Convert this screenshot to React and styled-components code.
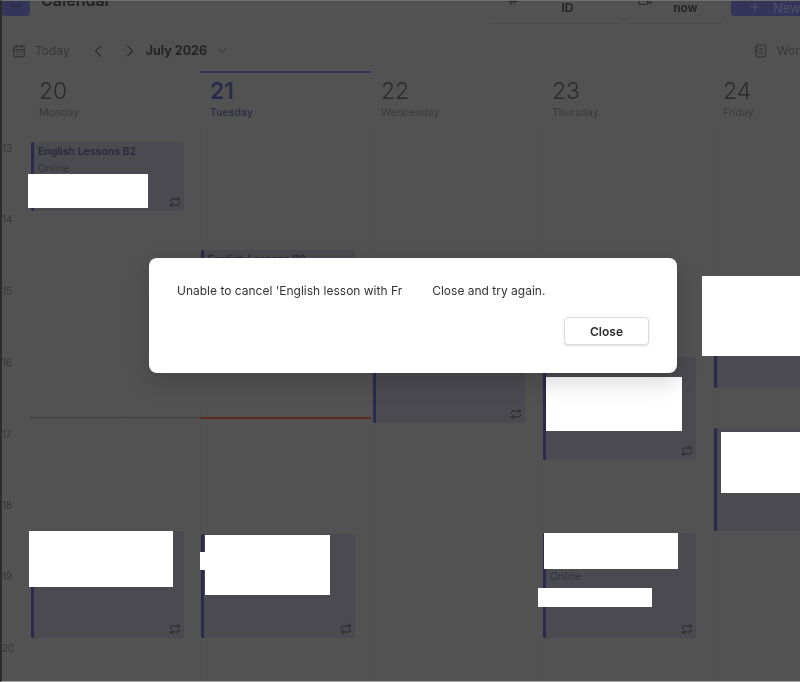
import styled, { createGlobalStyle } from "styled-components";
import { ChevronLeft, ChevronRight, ChevronDown, Repeat, Plus, Hash, Video, CalendarDays, NotebookText, Calendar } from "lucide-react";

const Global = createGlobalStyle`
  html, body { margin: 0; padding: 0; background: #525252; }
  * { box-sizing: border-box; }
`;

const Page = styled.div`
  position: relative;
  width: 800px;
  height: 682px;
  overflow: hidden;
  background: #525252;
  font-family: Inter, "Liberation Sans", sans-serif;
`;

const Backdrop = styled.div`
  height: 100%;
  display: flex;
  flex-direction: column;
  border-top: 1px solid #707070;
  border-bottom: 1px solid #a8a8a8;
  border-left: 2px solid #2c2c2c;
  filter: blur(0.7px);
`;

const TopBar = styled.div`
  height: 23px;
  flex: none;
  display: flex;
  align-items: flex-end;
  overflow: hidden;
`;

const AppIcon = styled.div`
  width: 28px;
  height: 34px;
  flex: none;
  border-radius: 4px;
  background: #35355a;
  margin-bottom: 8px;
  display: flex;
  align-items: flex-end;
  justify-content: center;
  padding-bottom: 9px;
  color: #25253a;
`;

const AppTitle = styled.div`
  margin: 0 0 14px 11px;
  font-size: 16px;
  font-weight: 600;
  line-height: 20px;
  color: #222;
`;

const TopButton = styled.div`
  height: 30px;
  flex: none;
  width: ${(p) => p.$w}px;
  margin-left: ${(p) => p.$ml}px;
  padding: 0 0 8px ${(p) => p.$pl}px;
  border-bottom: 1px solid #484848;
  display: flex;
  flex-direction: column;
  align-items: center;
  justify-content: flex-end;
  font-size: 12px;
  line-height: 14px;
  font-weight: 600;
  color: #222;
  position: relative;
`;

const TopButtonIcon = styled.span`
  position: absolute;
  top: 0;
  left: ${(p) => p.$x}px;
  color: #2a2a2a;
  display: flex;
`;

const NewButton = styled.div`
  flex: none;
  width: 80px;
  height: 30px;
  margin: 0 0 8px 9px;
  padding: 14px 0 0 17px;
  border-radius: 4px;
  background: #35355a;
  display: flex;
  align-items: flex-start;
  gap: 11px;
  font-size: 13px;
  line-height: 16px;
  color: #50506f;
`;

const Toolbar = styled.div`
  height: 47px;
  flex: none;
  display: flex;
  align-items: center;
  padding: 6px 0 0 10px;
  color: #333;
`;

const TodayLabel = styled.span`
  margin: 0 18px 0 9px;
  font-size: 12px;
  color: #383838;
`;

const MonthLabel = styled.span`
  margin: 0 8px 0 0;
  font-size: 12.5px;
  font-weight: 700;
  color: #242424;
`;

const NavButton = styled.span`
  display: flex;
  margin-right: ${(p) => p.$mr}px;
  color: #303030;
`;

const WorkWeek = styled.div`
  margin-left: auto;
  margin-right: -40px;
  display: flex;
  align-items: center;
  gap: 9px;
  font-size: 12px;
  color: #383838;
  white-space: nowrap;
`;

const DayHeaderRow = styled.div`
  height: 54px;
  flex: none;
  display: flex;
  padding-left: 27px;
`;

const DayHeader = styled.div`
  width: 171px;
  flex: none;
  padding: 5px 0 0 10px;
  border-top: 2px solid ${(p) => (p.$active ? "#33335c" : "transparent")};
`;

const DayNumber = styled.div`
  font-size: 23px;
  line-height: 27px;
  font-weight: ${(p) => (p.$active ? 600 : 300)};
  color: ${(p) => (p.$active ? "#2a2a4c" : "#2c2c2c")};
`;

const DayName = styled.div`
  font-size: 10.5px;
  line-height: 14px;
  margin-top: 1px;
  font-weight: ${(p) => (p.$active ? 600 : 400)};
  color: ${(p) => (p.$active ? "#303048" : "#3a3a3a")};
`;

const Body = styled.div`
  flex: 1;
  min-height: 0;
  display: flex;
`;

const Gutter = styled.div`
  width: 28px;
  flex: none;
  padding-top: 17px;
`;

const HourLabel = styled.div`
  height: 71.4px;
  font-size: 10px;
  line-height: 12px;
  color: #363636;
`;

const DayColumn = styled.div`
  position: relative;
  width: 171px;
  flex: none;
  border-right: 1px solid #4f4f4f;
`;

const Event = styled.div`
  position: absolute;
  left: ${(p) => p.$left}px;
  top: ${(p) => p.$top}px;
  width: ${(p) => p.$width}px;
  height: ${(p) => p.$height}px;
  padding: 3px 0 0 4px;
  background: #4a4a50;
  border-left: 3px solid #2a2a4e;
  border-radius: 2px;
`;

const EventTitle = styled.div`
  font-size: 10.5px;
  line-height: 14px;
  font-weight: 600;
  color: #2a2a38;
`;

const EventSpacer = styled.div`
  height: 31px;
`;

const EventPlace = styled.div`
  font-size: 10.5px;
  line-height: 14px;
  margin-top: 3px;
  color: #35353c;
`;

const RepeatMark = styled.span`
  position: absolute;
  right: 3px;
  bottom: 3px;
  display: flex;
  color: #26262a;
`;

const NowLine = styled.div`
  position: absolute;
  left: ${(p) => (p.$today ? -2 : 0)}px;
  right: 0;
  top: 292px;
  height: 0;
  border-top: ${(p) => (p.$today ? "2px solid #5f2a20" : "1px dotted #2c2c2c")};
`;

const Redaction = styled.div`
  position: absolute;
  left: ${(p) => p.$x}px;
  top: ${(p) => p.$y}px;
  width: ${(p) => p.$w}px;
  height: ${(p) => p.$h}px;
  background: #fff;
`;

const Dialog = styled.div`
  position: absolute;
  left: 149px;
  top: 258px;
  width: 528px;
  height: 115px;
  padding: 24px 28px 0;
  background: #fff;
  border-radius: 8px;
  box-shadow: 0 8px 24px rgba(0, 0, 0, 0.18);
  display: flex;
  flex-direction: column;
`;

const Message = styled.div`
  display: flex;
  gap: 30px;
  font-size: 12px;
  line-height: 17px;
  color: #333;
  white-space: nowrap;
`;

const DialogActions = styled.div`
  display: flex;
  justify-content: flex-end;
  margin: 18px 0 0 0;
`;

const CloseButton = styled.button`
  width: 85px;
  height: 28px;
  padding: 0;
  border: 1px solid #dcdcdc;
  border-radius: 4px;
  background: #fff;
  box-shadow: 0 1px 2px rgba(0, 0, 0, 0.14);
  font-family: inherit;
  font-size: 12px;
  font-weight: 600;
  color: #2b2b2b;
`;

const hours = ["13", "14", "15", "16", "17", "18", "19", "20"];

const days = [
  {
    num: "20",
    name: "Monday",
    events: [
      { top: 17, height: 69, left: 1, width: 153, title: "English Lessons B2", place: "Online" },
      { top: 406, height: 107, left: 1, width: 153 },
    ],
  },
  {
    num: "21",
    name: "Tuesday",
    active: true,
    events: [
      { top: 125, height: 100, left: 0, width: 154, title: "English Lessons B2", place: "Online" },
      { top: 409, height: 104, left: 0, width: 154 },
    ],
  },
  { num: "22", name: "Wednesday", events: [{ top: 227, height: 71, left: 1, width: 152 }] },
  {
    num: "23",
    name: "Thursday",
    events: [
      { top: 232, height: 103, left: 0, width: 153 },
      { top: 408, height: 105, left: 0, width: 153, spaced: true, place: "Online" },
    ],
  },
  {
    num: "24",
    name: "Friday",
    events: [
      { top: 155, height: 108, left: 0, width: 154 },
      { top: 303, height: 103, left: 0, width: 154 },
    ],
  },
];

const redactions = [
  { x: 28, y: 174, w: 120, h: 34 },
  { x: 702, y: 276, w: 98, h: 80 },
  { x: 546, y: 377, w: 136, h: 54 },
  { x: 721, y: 432, w: 79, h: 61 },
  { x: 29, y: 531, w: 144, h: 56 },
  { x: 205, y: 535, w: 125, h: 60 },
  { x: 200, y: 552, w: 6, h: 18 },
  { x: 544, y: 533, w: 134, h: 36 },
  { x: 538, y: 588, w: 114, h: 19 },
];

const App = () => {
  return (
    <Page>
      <Global />
      <Backdrop>
        <TopBar>
          <AppIcon>
            <Calendar size={12} />
          </AppIcon>
          <AppTitle>Calendar</AppTitle>
          <TopButton $w={127} $ml={381} $pl={24}>
            <TopButtonIcon $x={15}>
              <Hash size={12} />
            </TopButtonIcon>
            ID
          </TopButton>
          <TopButton $w={93} $ml={10} $pl={20}>
            <TopButtonIcon $x={9}>
              <Video size={14} />
            </TopButtonIcon>
            now
          </TopButton>
          <NewButton>
            <Plus size={14} />
            New
          </NewButton>
        </TopBar>
        <Toolbar>
          <CalendarDays size={14} />
          <TodayLabel>Today</TodayLabel>
          <NavButton $mr={12}>
            <ChevronLeft size={20} strokeWidth={1.4} />
          </NavButton>
          <NavButton $mr={6}>
            <ChevronRight size={20} strokeWidth={1.4} />
          </NavButton>
          <MonthLabel>July 2026</MonthLabel>
          <NavButton $mr={0}>
            <ChevronDown size={15} strokeWidth={1.4} />
          </NavButton>
          <WorkWeek>
            <NotebookText size={14} />
            Work week
          </WorkWeek>
        </Toolbar>
        <DayHeaderRow>
          {days.map((d) => (
            <DayHeader key={d.num} $active={d.active}>
              <DayNumber $active={d.active}>{d.num}</DayNumber>
              <DayName $active={d.active}>{d.name}</DayName>
            </DayHeader>
          ))}
        </DayHeaderRow>
        <Body>
          <Gutter>
            {hours.map((h) => (
              <HourLabel key={h}>{h}</HourLabel>
            ))}
          </Gutter>
          {days.map((d, i) => (
            <DayColumn key={d.num}>
              {d.events.map((e) => (
                <Event key={e.top} $top={e.top} $height={e.height} $left={e.left} $width={e.width}>
                  {e.title && <EventTitle>{e.title}</EventTitle>}
                  {e.spaced && <EventSpacer />}
                  {e.place && <EventPlace>{e.place}</EventPlace>}
                  <RepeatMark>
                    <Repeat size={12} />
                  </RepeatMark>
                </Event>
              ))}
              {i === 0 && <NowLine />}
              {i === 1 && <NowLine $today />}
            </DayColumn>
          ))}
        </Body>
      </Backdrop>
      {redactions.map((r) => (
        <Redaction key={`${r.x}-${r.y}`} $x={r.x} $y={r.y} $w={r.w} $h={r.h} />
      ))}
      <Dialog>
        <Message>
          <span>Unable to cancel 'English lesson with Fr</span>
          <span>Close and try again.</span>
        </Message>
        <DialogActions>
          <CloseButton>Close</CloseButton>
        </DialogActions>
      </Dialog>
    </Page>
  );
};

export default App;
